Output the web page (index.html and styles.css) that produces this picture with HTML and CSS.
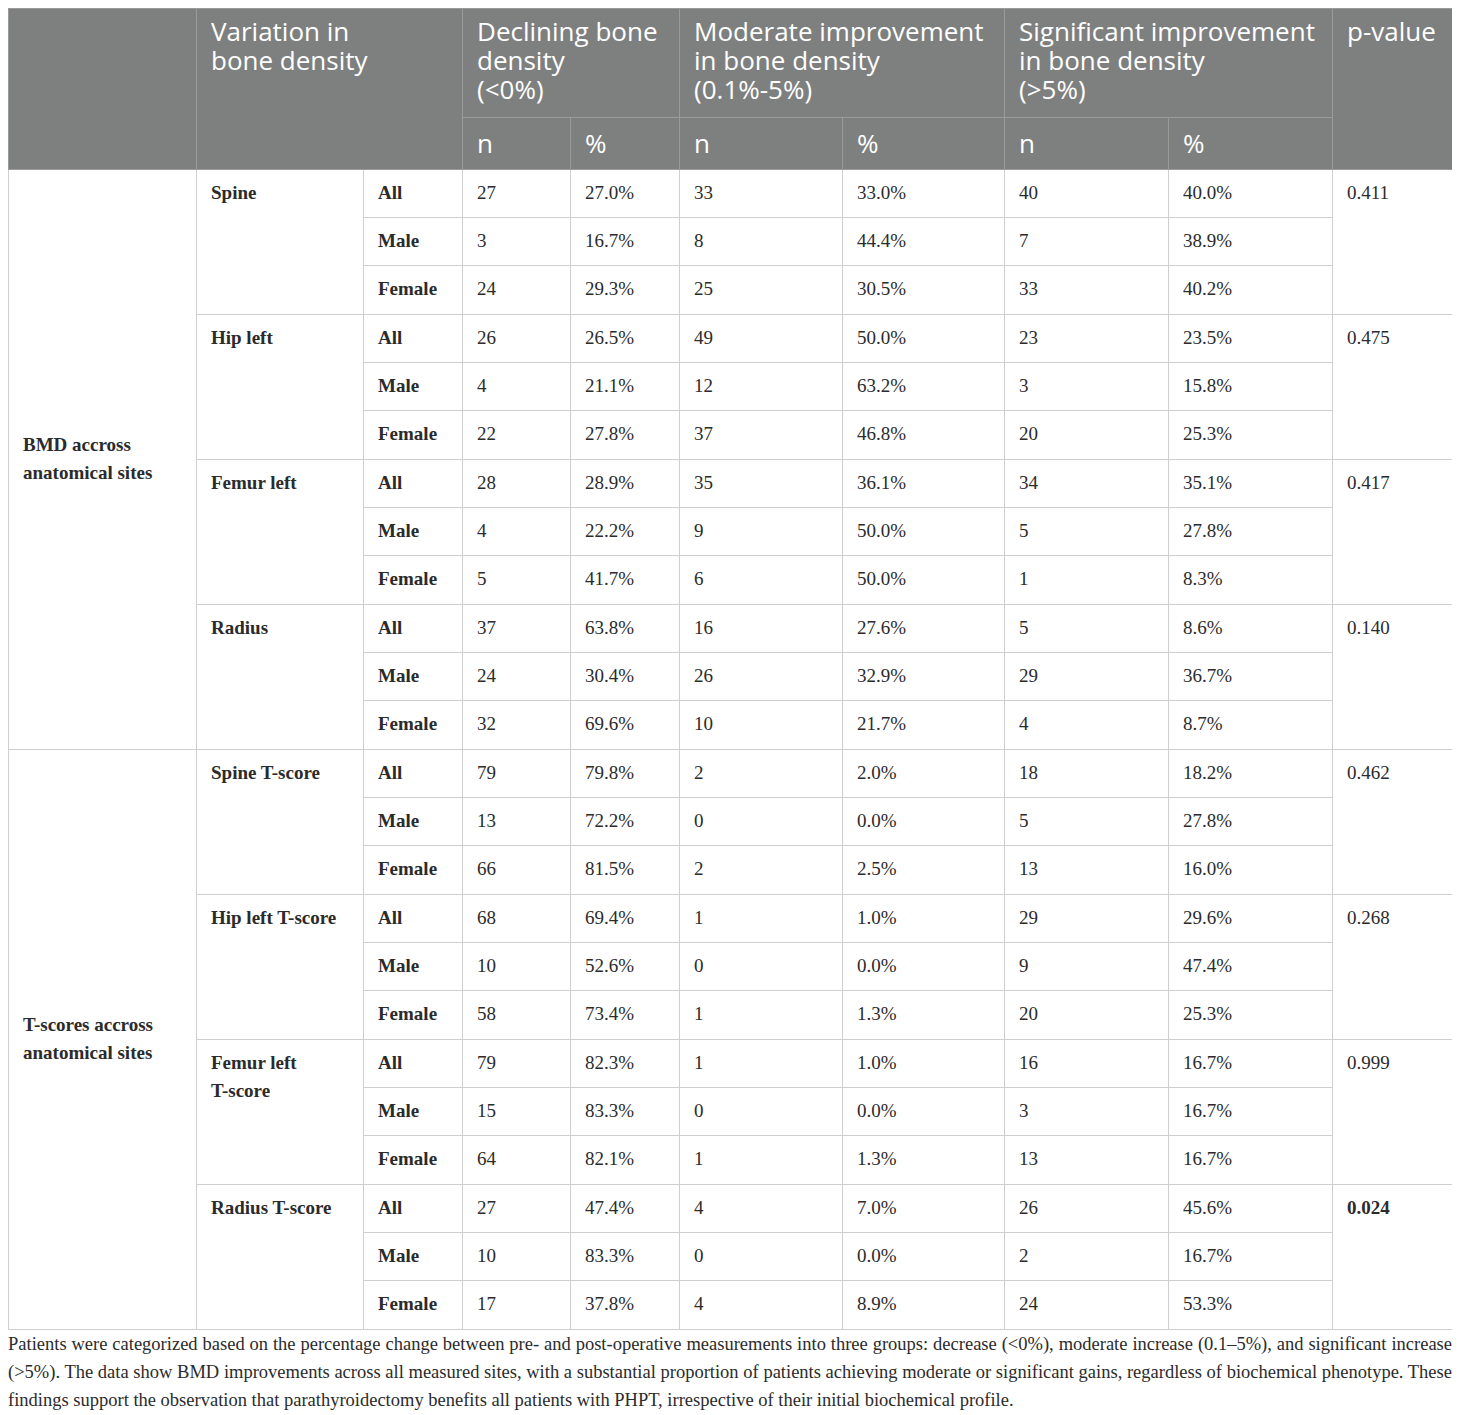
FILE: index.html
```html
<!DOCTYPE html>
<html>
<head>
<meta charset="utf-8">
<link rel="stylesheet" href="styles.css">
</head>
<body>
<table class="tbl">
<colgroup>
<col class="c1"><col class="c2"><col class="c3"><col class="c4"><col class="c5"><col class="c6"><col class="c7"><col class="c8"><col class="c9"><col class="c10">
</colgroup>
<thead>
<tr class="h1">
<th rowspan="2" class="blank"></th>
<th rowspan="2" colspan="2">Variation in<br>bone density</th>
<th colspan="2">Declining bone<br>density<br>(&lt;0%)</th>
<th colspan="2">Moderate improvement<br>in bone density<br>(0.1%-5%)</th>
<th colspan="2">Significant improvement<br>in bone density<br>(&gt;5%)</th>
<th rowspan="2">p-value</th>
</tr>
<tr class="h2">
<th>n</th><th>%</th><th>n</th><th>%</th><th>n</th><th>%</th>
</tr>
</thead>
<tbody>
<tr><td rowspan="12" class="grp">BMD accross<br>anatomical sites</td><td rowspan="3" class="lbl">Spine</td><td class="lbl">All</td><td>27</td><td>27.0%</td><td>33</td><td>33.0%</td><td>40</td><td>40.0%</td><td rowspan="3">0.411</td></tr>
<tr><td class="lbl">Male</td><td>3</td><td>16.7%</td><td>8</td><td>44.4%</td><td>7</td><td>38.9%</td></tr>
<tr><td class="lbl">Female</td><td>24</td><td>29.3%</td><td>25</td><td>30.5%</td><td>33</td><td>40.2%</td></tr>
<tr><td rowspan="3" class="lbl">Hip left</td><td class="lbl">All</td><td>26</td><td>26.5%</td><td>49</td><td>50.0%</td><td>23</td><td>23.5%</td><td rowspan="3">0.475</td></tr>
<tr><td class="lbl">Male</td><td>4</td><td>21.1%</td><td>12</td><td>63.2%</td><td>3</td><td>15.8%</td></tr>
<tr><td class="lbl">Female</td><td>22</td><td>27.8%</td><td>37</td><td>46.8%</td><td>20</td><td>25.3%</td></tr>
<tr><td rowspan="3" class="lbl">Femur left</td><td class="lbl">All</td><td>28</td><td>28.9%</td><td>35</td><td>36.1%</td><td>34</td><td>35.1%</td><td rowspan="3">0.417</td></tr>
<tr><td class="lbl">Male</td><td>4</td><td>22.2%</td><td>9</td><td>50.0%</td><td>5</td><td>27.8%</td></tr>
<tr><td class="lbl">Female</td><td>5</td><td>41.7%</td><td>6</td><td>50.0%</td><td>1</td><td>8.3%</td></tr>
<tr><td rowspan="3" class="lbl">Radius</td><td class="lbl">All</td><td>37</td><td>63.8%</td><td>16</td><td>27.6%</td><td>5</td><td>8.6%</td><td rowspan="3">0.140</td></tr>
<tr><td class="lbl">Male</td><td>24</td><td>30.4%</td><td>26</td><td>32.9%</td><td>29</td><td>36.7%</td></tr>
<tr><td class="lbl">Female</td><td>32</td><td>69.6%</td><td>10</td><td>21.7%</td><td>4</td><td>8.7%</td></tr>
<tr><td rowspan="12" class="grp">T-scores accross<br>anatomical sites</td><td rowspan="3" class="lbl">Spine T-score</td><td class="lbl">All</td><td>79</td><td>79.8%</td><td>2</td><td>2.0%</td><td>18</td><td>18.2%</td><td rowspan="3">0.462</td></tr>
<tr><td class="lbl">Male</td><td>13</td><td>72.2%</td><td>0</td><td>0.0%</td><td>5</td><td>27.8%</td></tr>
<tr><td class="lbl">Female</td><td>66</td><td>81.5%</td><td>2</td><td>2.5%</td><td>13</td><td>16.0%</td></tr>
<tr><td rowspan="3" class="lbl">Hip left T-score</td><td class="lbl">All</td><td>68</td><td>69.4%</td><td>1</td><td>1.0%</td><td>29</td><td>29.6%</td><td rowspan="3">0.268</td></tr>
<tr><td class="lbl">Male</td><td>10</td><td>52.6%</td><td>0</td><td>0.0%</td><td>9</td><td>47.4%</td></tr>
<tr><td class="lbl">Female</td><td>58</td><td>73.4%</td><td>1</td><td>1.3%</td><td>20</td><td>25.3%</td></tr>
<tr><td rowspan="3" class="lbl">Femur left<br>T-score</td><td class="lbl">All</td><td>79</td><td>82.3%</td><td>1</td><td>1.0%</td><td>16</td><td>16.7%</td><td rowspan="3">0.999</td></tr>
<tr><td class="lbl">Male</td><td>15</td><td>83.3%</td><td>0</td><td>0.0%</td><td>3</td><td>16.7%</td></tr>
<tr><td class="lbl">Female</td><td>64</td><td>82.1%</td><td>1</td><td>1.3%</td><td>13</td><td>16.7%</td></tr>
<tr><td rowspan="3" class="lbl">Radius T-score</td><td class="lbl">All</td><td>27</td><td>47.4%</td><td>4</td><td>7.0%</td><td>26</td><td>45.6%</td><td rowspan="3" class="lbl">0.024</td></tr>
<tr><td class="lbl">Male</td><td>10</td><td>83.3%</td><td>0</td><td>0.0%</td><td>2</td><td>16.7%</td></tr>
<tr><td class="lbl">Female</td><td>17</td><td>37.8%</td><td>4</td><td>8.9%</td><td>24</td><td>53.3%</td></tr>
</tbody>
</table>
<p class="note">Patients were categorized based on the percentage change between pre- and post-operative measurements into three groups: decrease (&lt;0%), moderate increase (0.1–5%), and significant increase (&gt;5%). The data show BMD improvements across all measured sites, with a substantial proportion of patients achieving moderate or significant gains, regardless of biochemical phenotype. These findings support the observation that parathyroidectomy benefits all patients with PHPT, irrespective of their initial biochemical profile.</p>
</body>
</html>
```
FILE: styles.css
```css
body {
  margin: 8px;
  background: #ffffff;
  color: #2b2b2b;
  font-family: "Liberation Serif", "Times New Roman", serif;
}
.tbl {
  width: 1444px;
  table-layout: fixed;
  border-collapse: collapse;
}
.c1 { width: 188px; }
.c2 { width: 167px; }
.c3 { width: 99px; }
.c4 { width: 108px; }
.c5 { width: 109px; }
.c6 { width: 163px; }
.c7 { width: 162px; }
.c8 { width: 164px; }
.c9 { width: 164px; }
.c10 { width: 120px; }
.tbl th {
  background: #7e7f7f;
  color: #ffffff;
  font-family: "Open Sans", "Noto Sans", sans-serif;
  font-weight: 400;
  font-size: 26px;
  line-height: 29px;
  text-align: left;
  vertical-align: top;
  padding: 8px 14px 10px 14px;
  border: 1px solid #9a9a9a;
  white-space: nowrap;
}
.tbl tr.h1 th { height: 90px; }
.tbl tr.h2 th { height: 30px; padding-top: 11px; }
.tbl td {
  font-size: 19px;
  line-height: 28px;
  vertical-align: top;
  padding: 9px 14px 10px 14px;
  height: 28px;
  border: 1px solid #cfcfcf;
}
.tbl tbody tr:nth-child(3n) > td { height: 29px; }
.tbl td.lbl { font-weight: 700; }
.tbl td.grp {
  font-weight: 700;
  vertical-align: middle;
}
.note {
  margin: 0;
  font-size: 18.5px;
  line-height: 28px;
  text-align: justify;
  color: #2b2b2b;
}
```
